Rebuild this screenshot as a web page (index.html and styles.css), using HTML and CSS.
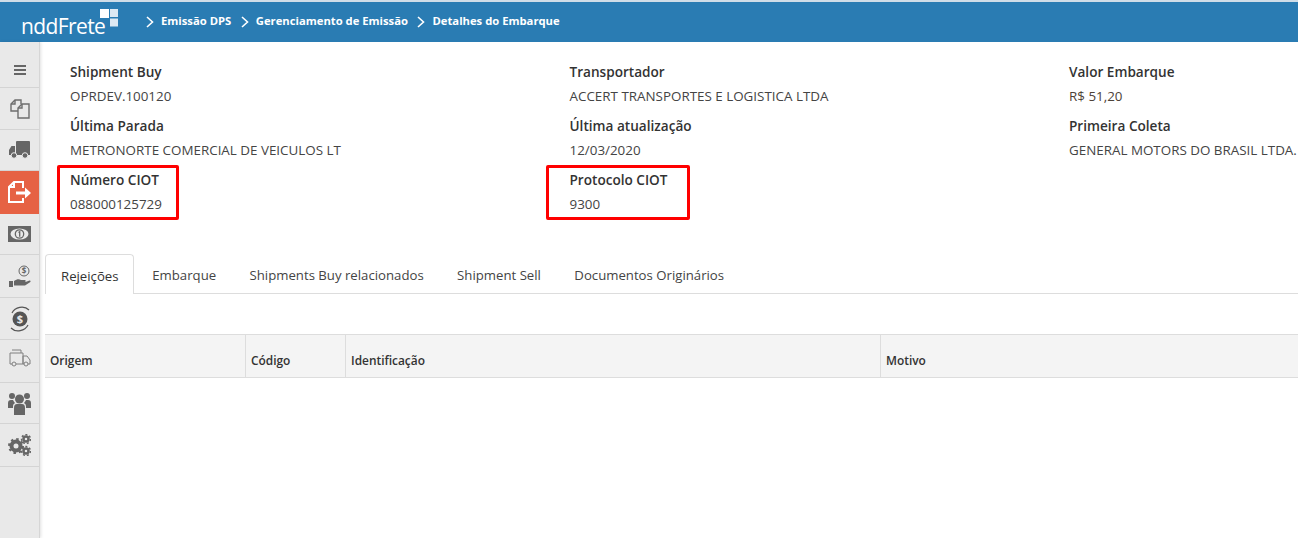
FILE: index.html
```html
<!DOCTYPE html>
<html lang="pt-BR">
<head>
    <meta charset="UTF-8">
    <meta name="viewport" content="width=device-width, initial-scale=1.0">
    <title>Detalhes do Embarque</title>
    <link rel="stylesheet" href="styles.css">
</head>
<body>
    <header class="topbar">
        <div class="logo">
            <span class="logo-text">nddFrete</span>
            <svg class="logo-mark" width="20" height="20" viewBox="0 0 20 20">
                <rect x="0" y="0" width="9" height="9" fill="#fff"/>
                <rect x="10" y="0" width="8" height="8" fill="#dce9f3"/>
                <rect x="10" y="9.5" width="8" height="8" fill="#dce9f3"/>
            </svg>
        </div>
        <nav class="crumbs">
            <svg class="chev" width="8" height="12" viewBox="0 0 8 12"><path d="M1 1l5.5 5L1 11" fill="none" stroke="#fff" stroke-width="1.6"/></svg>
            <span>Emissão DPS</span>
            <svg class="chev" width="8" height="12" viewBox="0 0 8 12"><path d="M1 1l5.5 5L1 11" fill="none" stroke="#fff" stroke-width="1.6"/></svg>
            <span>Gerenciamento de Emissão</span>
            <svg class="chev" width="8" height="12" viewBox="0 0 8 12"><path d="M1 1l5.5 5L1 11" fill="none" stroke="#fff" stroke-width="1.6"/></svg>
            <span>Detalhes do Embarque</span>
        </nav>
    </header>

    <div class="app">
        <aside class="sidebar">
            <a class="side-item h46 menu-item">
                <svg width="14" height="12" viewBox="0 0 14 12"><path d="M1 2h12M1 6h12M1 10h12" stroke="#666" stroke-width="2"/></svg>
            </a>
            <a class="side-item h42">
                <svg width="22" height="22" viewBox="0 0 22 22" fill="none" stroke="#6e6e6e" stroke-width="1.4"><path d="M9 13H2V6l4-4h6v4"/><path d="M6 2v4H2"/><path d="M9 20V10l4-4h7v14z"/><path d="M13 6v4H9"/></svg>
            </a>
            <a class="side-item h41">
                <svg width="21" height="18" viewBox="0 0 21 18" fill="#666"><path d="M7 1q0-1 1-1h12q1 0 1 1v13H7z"/><path d="M6 5v9H0V9l2.500-4z"/><circle cx="5" cy="14.500" r="2.800" stroke="#e9e9e9"/><circle cx="16" cy="14.500" r="2.800" stroke="#e9e9e9"/></svg>
            </a>
            <a class="side-item h43 active">
                <svg width="23" height="23" viewBox="0 0 23 23" fill="none" stroke="#fff" stroke-width="2"><path d="M15 7V1H6L1 6v15h14v-4"/><path d="M6 1v5H1"/><path d="M8 12h10" stroke-width="3"/><path d="M17 6.500l6 5.500-6 5.500z" fill="#fff" stroke="none"/></svg>
            </a>
            <a class="side-item h41">
                <svg width="23" height="16" viewBox="0 0 23 16"><rect width="23" height="16" fill="#666"/><ellipse cx="11.500" cy="8" rx="9" ry="5.500" fill="#e9e9e9"/><circle cx="11.500" cy="8" r="4.200" fill="#e9e9e9" stroke="#666" stroke-width="1.300"/><path d="M10.500 6.500l1.200-.8v5" fill="none" stroke="#666" stroke-width="1.300"/></svg>
            </a>
            <a class="side-item h43">
                <svg width="22" height="23" viewBox="0 0 22 23"><circle cx="15" cy="6" r="5" fill="none" stroke="#666"/><text class="coin coin-sm" x="15" y="9" text-anchor="middle">$</text><rect x="0" y="16" width="4" height="6" fill="#666"/><path d="M5 16c3-2 5-2 7-1h4c1 .3 1 1.700 0 2h-3.500 4l4-1.500c1.200-.3 1.500 1 .5 1.700l-5 3.300H5z" fill="#666"/></svg>
            </a>
            <a class="side-item h42">
                <svg width="20" height="28" viewBox="0 0 20 28"><path d="M2 8c3-6 12-8 17-3M18 20c-3 6-12 8-17 3" fill="none" stroke="#555" stroke-width="1.200"/><circle cx="10" cy="14" r="7.500" fill="#555"/><text class="coin" x="10" y="18" text-anchor="middle">$</text></svg>
            </a>
            <a class="side-item h43 van-item">
                <svg width="22" height="19" viewBox="0 0 22 19" fill="none" stroke="#808080"><path d="M1 5h13v11H1z"/><path d="M3 2h9v3"/><path d="M14 8h4l3 4v4h-7z"/><circle cx="5" cy="16" r="2" fill="#e9e9e9"/><circle cx="17" cy="16" r="2" fill="#e9e9e9"/></svg>
            </a>
            <a class="side-item h41">
                <svg width="23" height="23" viewBox="0 0 23 23" fill="#666"><circle cx="4" cy="4" r="3"/><circle cx="19" cy="4" r="3"/><circle cx="11.500" cy="7" r="4.500"/><path d="M0 11q0-3 3-3h2q1 2 2 3-2 1-2 3v2H0zM23 11q0-3-3-3h-2q-1 2-2 3 2 1 2 3v2h5z"/><path d="M6 16q0-4 3-4h5q3 0 3 4v7H6z"/></svg>
            </a>
            <a class="side-item h43">
                <svg width="23" height="22" viewBox="0 0 23 22" fill="none" stroke="#666"><circle cx="8" cy="12" r="4.500" stroke-width="4"/><circle cx="8" cy="12" r="7" stroke-width="2" stroke-dasharray="2.500 3"/><circle cx="18" cy="5" r="2.500" stroke-width="2.500"/><circle cx="18" cy="5" r="4.500" stroke-width="1.500" stroke-dasharray="2 2"/><circle cx="18" cy="17" r="2.500" stroke-width="2.500"/><circle cx="18" cy="17" r="4.500" stroke-width="1.500" stroke-dasharray="2 2"/></svg>
            </a>
        </aside>

        <main class="content">
            <section class="info">
                <div class="field">
                    <strong>Shipment Buy</strong>
                    <span>OPRDEV.100120</span>
                </div>
                <div class="field">
                    <strong>Transportador</strong>
                    <span>ACCERT TRANSPORTES E LOGISTICA LTDA</span>
                </div>
                <div class="field">
                    <strong>Valor Embarque</strong>
                    <span class="money">R$ 51,20</span>
                </div>
                <div class="field">
                    <strong>Última Parada</strong>
                    <span>METRONORTE COMERCIAL DE VEICULOS LT</span>
                </div>
                <div class="field">
                    <strong>Última atualização</strong>
                    <span>12/03/2020</span>
                </div>
                <div class="field">
                    <strong>Primeira Coleta</strong>
                    <span>GENERAL MOTORS DO BRASIL LTDA.</span>
                </div>
                <div class="field">
                    <strong>Número CIOT</strong>
                    <span>088000125729</span>
                    <i class="mark mark-numero"></i>
                </div>
                <div class="field">
                    <strong>Protocolo CIOT</strong>
                    <span>9300</span>
                    <i class="mark mark-protocolo"></i>
                </div>
            </section>

            <ul class="tabs">
                <li class="tab active">Rejeições</li>
                <li class="tab">Embarque</li>
                <li class="tab">Shipments Buy relacionados</li>
                <li class="tab">Shipment Sell</li>
                <li class="tab">Documentos Originários</li>
            </ul>

            <div class="grid-head">
                <div class="col col-origem">Origem</div>
                <div class="col col-codigo">Código</div>
                <div class="col col-ident">Identificação</div>
                <div class="col col-motivo">Motivo</div>
            </div>
        </main>
    </div>
</body>
</html>
```

FILE: styles.css
```css
* {
    box-sizing: border-box;
    margin: 0;
    padding: 0;
}

html, body {
    height: 100%;
    overflow: hidden;
}

body {
    font-family: 'Open Sans', 'Noto Sans', sans-serif;
    font-size: 12px;
    color: #333;
    background: #fff;
    display: flex;
    flex-direction: column;
}

.topbar {
    flex: none;
    height: 42px;
    background: #2a7cb3;
    border-top: 2px solid #cfdde8;
    display: flex;
    align-items: center;
    color: #fff;
}

.logo {
    width: 146px;
    padding-left: 21px;
    display: flex;
    align-items: flex-start;
}

.logo-text {
    font-size: 21px;
    line-height: 30px;
    letter-spacing: -0.6px;
    margin-top: 8px;
}

.logo-mark {
    margin-left: -5px;
    margin-top: 6px;
}

.crumbs {
    display: flex;
    align-items: center;
    font-weight: 700;
    font-size: 11.250px;
    padding-bottom: 3px;
}

.crumbs span {
    margin-left: 7px;
    margin-right: 9.500px;
}

.chev {
    margin-top: 3px;
}

.app {
    flex: 1;
    display: flex;
    min-height: 0;
}

.sidebar {
    flex: none;
    width: 40px;
    background: #e9e9e9;
    border-right: 1px solid #d6d6d6;
    box-shadow: 1px 0 3px rgba(0, 0, 0, 0.12);
}

.side-item {
    display: flex;
    align-items: center;
    justify-content: center;
    border-bottom: 1px solid #d4d4d4;
}

.side-item.active {
    background: #e66244;
    border-bottom: none;
}

.menu-item {
    padding-top: 10px;
}

.van-item {
    padding-bottom: 8px;
}

.h41 { height: 41px; }
.h42 { height: 42px; }
.h43 { height: 43px; }
.h46 { height: 46px; }

.coin {
    font-family: 'Open Sans', sans-serif;
    font-size: 11px;
    font-weight: 700;
    fill: #e9e9e9;
}

.coin-sm {
    font-size: 8px;
    fill: #666;
}

.content {
    flex: 1;
    min-width: 0;
    padding: 21px 0 0 5px;
}

.info {
    display: grid;
    grid-template-columns: 499.5px 499.5px 1fr;
    grid-auto-rows: 54px;
    padding-left: 25px;
}

.field {
    position: relative;
    display: flex;
    flex-direction: column;
    gap: 6px;
    font-size: 13.400px;
    line-height: 18px;
    white-space: nowrap;
    color: #444;
}

.field strong {
    font-weight: 600;
    font-size: 13.600px;
    color: #333;
}

.money {
    color: #4d4238;
}

.mark {
    position: absolute;
    top: -6px;
    height: 55px;
    border: 3px solid #f00;
    border-radius: 2px;
}

.mark-numero {
    left: -13px;
    width: 122px;
}

.mark-protocolo {
    left: -24px;
    width: 144px;
}

.tabs {
    display: flex;
    list-style: none;
    height: 40px;
    margin-top: 29px;
    border-bottom: 1px solid #ddd;
    font-size: 13.200px;
}

.tab {
    padding: 0 16.700px;
    line-height: 43px;
    height: 40px;
    color: #444;
}

.tab.active {
    color: #333;
    background: #fff;
    border: 1px solid #ddd;
    border-bottom: none;
    border-radius: 4px 4px 0 0;
    padding: 0 14px 0 15px;
    margin-right: 2px;
}

.grid-head {
    display: flex;
    height: 44px;
    margin-top: 40px;
    background: #f4f4f4;
    border-top: 1px solid #ddd;
    border-bottom: 1px solid #ddd;
    font-weight: 600;
    font-size: 11.900px;
    line-height: 51px;
}

.col {
    padding-left: 5px;
    border-right: 1px solid #ddd;
}

.col-origem { width: 201px; }
.col-codigo { width: 100px; }
.col-ident { width: 535px; }
.col-motivo { flex: 1; border-right: none; }
```
